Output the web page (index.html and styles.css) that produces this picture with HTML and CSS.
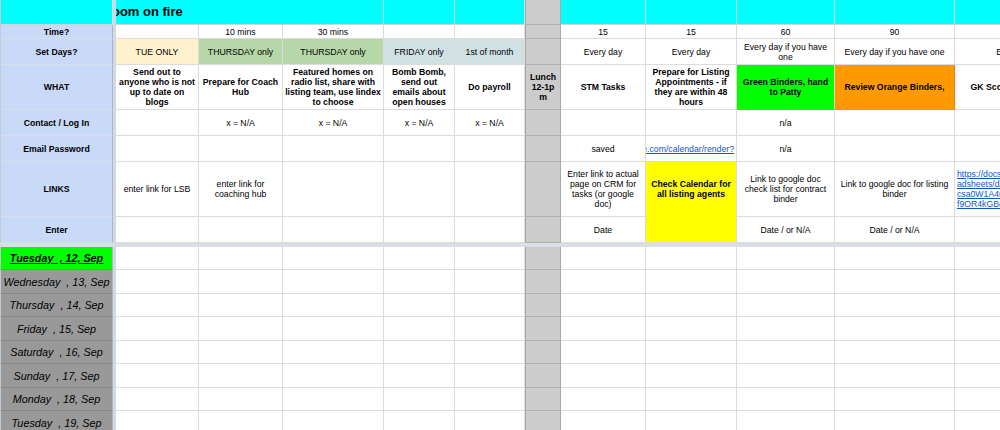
FILE: index.html
```html
<!DOCTYPE html>
<html>
<head>
<meta charset="utf-8">
<title>Schedule</title>
<link rel="stylesheet" href="styles.css">
</head>
<body>
<div class="sheet">
  <div class="vband"></div>
  <div class="hband"></div>

  <!-- row 1 -->
  <div class="c cyan colA"></div>
  <div class="c cyan title"><span>Zoom on fire</span></div>
  <div class="c cyan"></div>
  <div class="c cyan"></div>
  <div class="c lunch"></div>
  <div class="c cyan"></div>
  <div class="c cyan"></div>
  <div class="c cyan"></div>
  <div class="c cyan"></div>
  <div class="c cyan"></div>

  <!-- row 2 -->
  <div class="c lbl colA">Time?</div>
  <div class="c"></div>
  <div class="c">10 mins</div>
  <div class="c">30 mins</div>
  <div class="c"></div>
  <div class="c"></div>
  <div class="c lunch"></div>
  <div class="c">15</div>
  <div class="c">15</div>
  <div class="c">60</div>
  <div class="c">90</div>
  <div class="c"></div>

  <!-- row 3 -->
  <div class="c lbl colA">Set Days?</div>
  <div class="c tue">TUE ONLY</div>
  <div class="c thu">THURSDAY only</div>
  <div class="c thu">THURSDAY only</div>
  <div class="c fri">FRIDAY only</div>
  <div class="c fri">1st of month</div>
  <div class="c lunch"></div>
  <div class="c">Every day</div>
  <div class="c">Every day</div>
  <div class="c">Every day if you have<br>one</div>
  <div class="c">Every day if you have one</div>
  <div class="c">Every day</div>

  <!-- row 4 -->
  <div class="c lbl colA">WHAT</div>
  <div class="c b">Send out to<br>anyone who is not<br>up to date on<br>blogs</div>
  <div class="c b">Prepare for Coach<br>Hub</div>
  <div class="c b">Featured homes on<br>radio list, share with<br>listing team, use lindex<br>to choose</div>
  <div class="c b">Bomb Bomb,<br>send out<br>emails about<br>open houses</div>
  <div class="c b">Do payroll</div>
  <div class="c lunch b">Lunch<br>12-1p<br>m</div>
  <div class="c b">STM Tasks</div>
  <div class="c b">Prepare for Listing<br>Appointments - if<br>they are within 48<br>hours</div>
  <div class="c b green">Green Binders, hand<br>to Patty</div>
  <div class="c b orange">Review Orange Binders,</div>
  <div class="c b">GK Scorecard Update</div>

  <!-- row 5 -->
  <div class="c lbl colA">Contact / Log In</div>
  <div class="c"></div>
  <div class="c">x = N/A</div>
  <div class="c">x = N/A</div>
  <div class="c">x = N/A</div>
  <div class="c">x = N/A</div>
  <div class="c lunch"></div>
  <div class="c"></div>
  <div class="c"></div>
  <div class="c">n/a</div>
  <div class="c"></div>
  <div class="c"></div>

  <!-- row 6 -->
  <div class="c lbl colA">Email Password</div>
  <div class="c"></div>
  <div class="c"></div>
  <div class="c"></div>
  <div class="c"></div>
  <div class="c"></div>
  <div class="c lunch"></div>
  <div class="c">saved</div>
  <div class="c url"><span>https://calendar.google.com/calendar/render?</span></div>
  <div class="c">n/a</div>
  <div class="c"></div>
  <div class="c"></div>

  <!-- row 7 -->
  <div class="c lbl colA">LINKS</div>
  <div class="c">enter link for LSB</div>
  <div class="c">enter link for<br>coaching hub</div>
  <div class="c"></div>
  <div class="c"></div>
  <div class="c"></div>
  <div class="c lunch"></div>
  <div class="c">Enter link to actual<br>page on CRM for<br>tasks (or google<br>doc)</div>
  <div class="c b yellow top">Check Calendar for<br>all listing agents</div>
  <div class="c">Link to google doc<br>check list for contract<br>binder</div>
  <div class="c">Link to google doc for listing<br>binder</div>
  <div class="c url left"><span>https://docs.google.com/spre<br>adsheets/d/1xQ7bLz3Ue8rT-<br>csa0W1A4mNq0yPz2Hh5kVw<br>f9OR4kGBedit</span></div>

  <!-- row 8 -->
  <div class="c lbl colA">Enter</div>
  <div class="c"></div>
  <div class="c"></div>
  <div class="c"></div>
  <div class="c"></div>
  <div class="c"></div>
  <div class="c lunch"></div>
  <div class="c">Date</div>
  <div class="c yellow"></div>
  <div class="c">Date / or N/A</div>
  <div class="c">Date / or N/A</div>
  <div class="c"></div>

  <!-- day rows -->
  <div class="c day today colA">Tuesday  , 12, Sep</div>
  <div class="c"></div><div class="c"></div><div class="c"></div><div class="c"></div><div class="c"></div>
  <div class="c lunch"></div>
  <div class="c"></div><div class="c"></div><div class="c"></div><div class="c"></div><div class="c"></div>

  <div class="c day colA">Wednesday  , 13, Sep</div>
  <div class="c"></div><div class="c"></div><div class="c"></div><div class="c"></div><div class="c"></div>
  <div class="c lunch"></div>
  <div class="c"></div><div class="c"></div><div class="c"></div><div class="c"></div><div class="c"></div>

  <div class="c day colA">Thursday  , 14, Sep</div>
  <div class="c"></div><div class="c"></div><div class="c"></div><div class="c"></div><div class="c"></div>
  <div class="c lunch"></div>
  <div class="c"></div><div class="c"></div><div class="c"></div><div class="c"></div><div class="c"></div>

  <div class="c day colA">Friday  , 15, Sep</div>
  <div class="c"></div><div class="c"></div><div class="c"></div><div class="c"></div><div class="c"></div>
  <div class="c lunch"></div>
  <div class="c"></div><div class="c"></div><div class="c"></div><div class="c"></div><div class="c"></div>

  <div class="c day colA">Saturday  , 16, Sep</div>
  <div class="c"></div><div class="c"></div><div class="c"></div><div class="c"></div><div class="c"></div>
  <div class="c lunch"></div>
  <div class="c"></div><div class="c"></div><div class="c"></div><div class="c"></div><div class="c"></div>

  <div class="c day colA">Sunday  , 17, Sep</div>
  <div class="c"></div><div class="c"></div><div class="c"></div><div class="c"></div><div class="c"></div>
  <div class="c lunch"></div>
  <div class="c"></div><div class="c"></div><div class="c"></div><div class="c"></div><div class="c"></div>

  <div class="c day colA">Monday  , 18, Sep</div>
  <div class="c"></div><div class="c"></div><div class="c"></div><div class="c"></div><div class="c"></div>
  <div class="c lunch"></div>
  <div class="c"></div><div class="c"></div><div class="c"></div><div class="c"></div><div class="c"></div>

  <div class="c day colA">Tuesday  , 19, Sep</div>
  <div class="c"></div><div class="c"></div><div class="c"></div><div class="c"></div><div class="c"></div>
  <div class="c lunch"></div>
  <div class="c"></div><div class="c"></div><div class="c"></div><div class="c"></div><div class="c"></div>
</div>
</body>
</html>
```

FILE: styles.css
```css
* { box-sizing: border-box; }

html, body {
  margin: 0;
  padding: 0;
  background: #ffffff;
}

body {
  width: 1000px;
  height: 430px;
  overflow: hidden;
}

.sheet {
  display: grid;
  grid-template-columns: 113px 3px 83px 84px 101px 71px 70px 36px 85px 91px 98px 120px 122px;
  grid-template-rows: 25px 14px 26px 45px 26px 26px 55px 26px 4px 23px 24px 23px 24px 23px 24px 23px 24px;
  font-family: "Liberation Sans", Arial, sans-serif;
  font-size: 8.7px;
  line-height: 10px;
  color: #000;
}

.vband {
  grid-column: 2;
  grid-row: 1 / -1;
  background: #d3d8e2;
}

.hband {
  grid-column: 1 / -1;
  grid-row: 9;
  background: #dadee6;
}

.c {
  display: flex;
  align-items: center;
  justify-content: center;
  text-align: center;
  min-width: 0;
  padding: 0 2px;
  white-space: nowrap;
  overflow: hidden;
  border-right: 1px solid #dcdcdc;
  border-bottom: 1px solid #dcdcdc;
}

.b { font-weight: bold; }

.colA {
  border-left: 1px solid #c3cad6;
  border-right: 1px solid #aab6cc;
}

.lbl {
  background: #c9daf8;
  font-weight: bold;
  border-bottom-color: #d7deeb;
}

.cyan {
  background: #00ffff;
  border-right-color: #bdf2f2;
  border-bottom-color: #cdd5d5;
}

.title {
  grid-column: span 3;
  justify-content: flex-start;
  padding: 0;
  font-size: 13px;
  font-weight: bold;
  line-height: 16px;
}

.title span { margin-left: -12px; }

.lunch {
  background: #cccccc;
  border-left: 1px solid #a8a8a8;
  border-right: 1px solid #a8a8a8;
  border-bottom-color: #b2b2b2;
}

.tue { background: #fff2cc; }
.thu { background: #b6d7a8; }
.fri { background: #d0e0e3; }

.green {
  background: #00ff00;
  border-bottom-color: #00ff00;
}

.orange {
  background: #ff9900;
  border-bottom-color: #ff9900;
  border-right-color: #e08600;
}

.yellow { background: #ffff00; }
.yellow.top { border-bottom-color: #ffff00; }

.url {
  justify-content: flex-end;
  color: #1155cc;
}

.url span { text-decoration: underline; }

.url.left {
  justify-content: flex-start;
  text-align: left;
}

.day {
  background: #999999;
  font-size: 10.8px;
  font-style: italic;
  white-space: pre;
  border-bottom-color: #888888;
}

.today {
  background: #00ff00;
  font-weight: bold;
  text-decoration: underline;
}
```
